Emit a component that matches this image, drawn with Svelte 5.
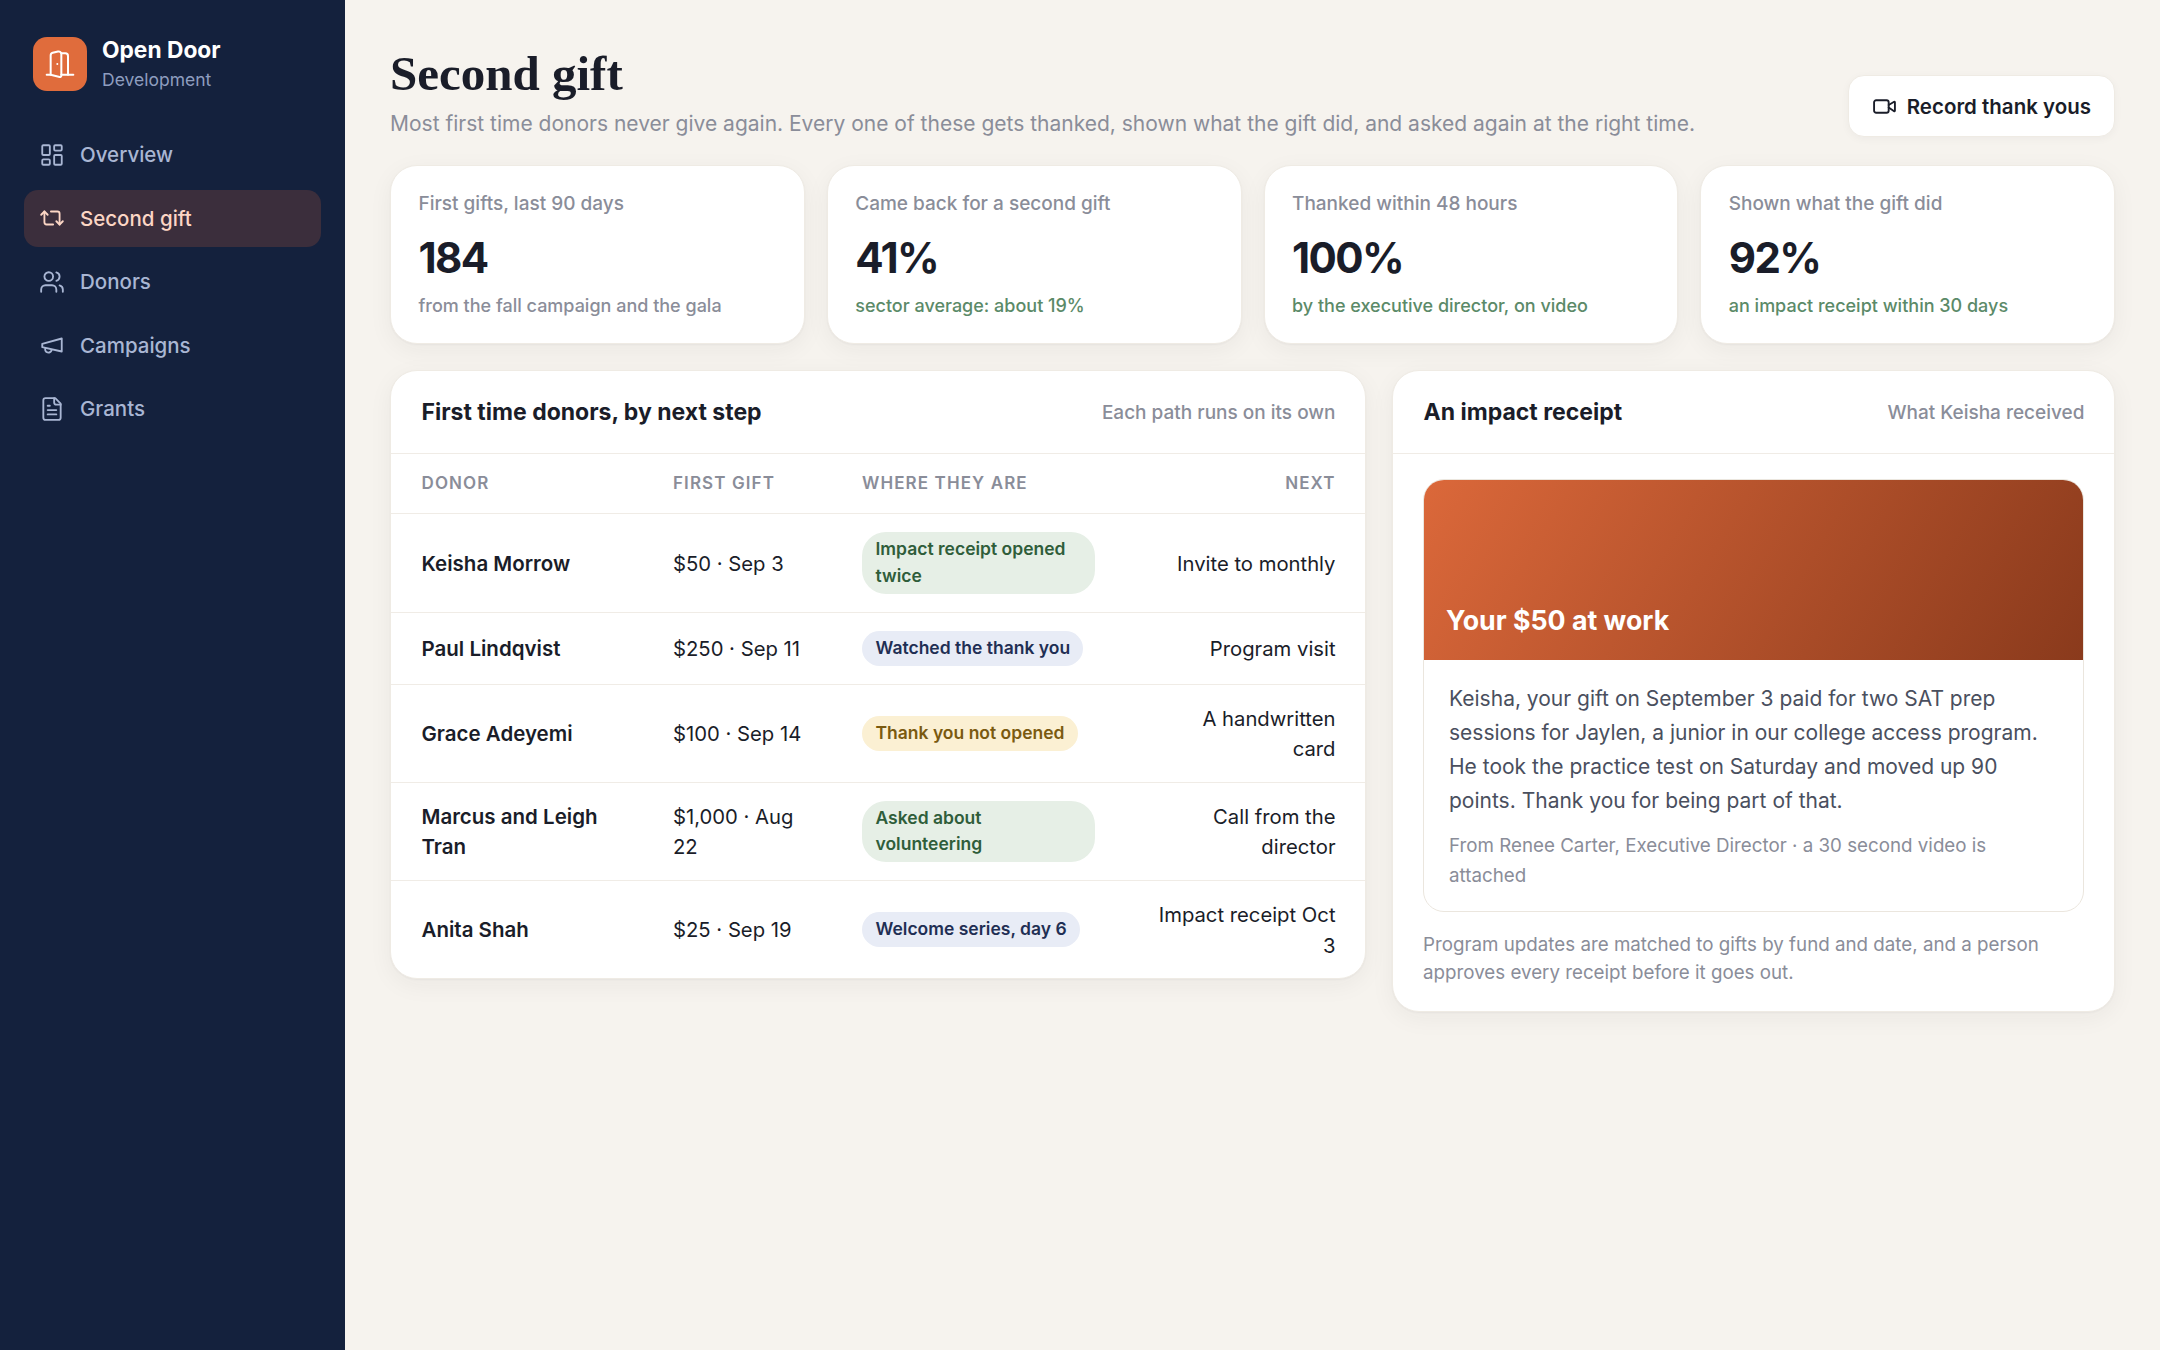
<script lang="ts">
  const nav = [
    { label: 'Overview', icon: 'grid' },
    { label: 'Second gift', icon: 'repeat', active: true },
    { label: 'Donors', icon: 'users' },
    { label: 'Campaigns', icon: 'megaphone' },
    { label: 'Grants', icon: 'file' }
  ];

  const stats = [
    { label: 'First gifts, last 90 days', value: '184', note: 'from the fall campaign and the gala', good: false },
    { label: 'Came back for a second gift', value: '41%', note: 'sector average: about 19%', good: true },
    { label: 'Thanked within 48 hours', value: '100%', note: 'by the executive director, on video', good: true },
    { label: 'Shown what the gift did', value: '92%', note: 'an impact receipt within 30 days', good: true }
  ];

  const donors = [
    { name: 'Keisha Morrow', gift: '$50 · Sep 3', status: 'Impact receipt opened twice', tone: 'green', next: 'Invite to monthly' },
    { name: 'Paul Lindqvist', gift: '$250 · Sep 11', status: 'Watched the thank you', tone: 'blue', next: 'Program visit' },
    { name: 'Grace Adeyemi', gift: '$100 · Sep 14', status: 'Thank you not opened', tone: 'amber', next: 'A handwritten card' },
    { name: 'Marcus and Leigh Tran', gift: '$1,000 · Aug 22', status: 'Asked about volunteering', tone: 'green', next: 'Call from the director' },
    { name: 'Anita Shah', gift: '$25 · Sep 19', status: 'Welcome series, day 6', tone: 'blue', next: 'Impact receipt Oct 3' }
  ];
</script>

<div class="shell">
  <aside class="sidebar">
    <div class="brand">
      <div class="logo">
        <svg viewBox="0 0 24 24" width="32" height="32" fill="none" stroke="currentColor" stroke-width="1.5" stroke-linecap="round" stroke-linejoin="round">
          <path d="M13 4h3a2 2 0 0 1 2 2v14" />
          <path d="M2 20h3" />
          <path d="M13 20h9" />
          <path d="M10 12v.01" />
          <path d="M13 4.562v16.157a1 1 0 0 1-1.242.97L5 20V5.562a2 2 0 0 1 1.515-1.94l4-1A2 2 0 0 1 13 4.561Z" />
        </svg>
      </div>
      <div>
        <div class="brand-name">Open Door</div>
        <div class="brand-sub">Development</div>
      </div>
    </div>

    <nav class="nav">
      {#each nav as item}
        <div class="nav-item" class:active={item.active}>
          <svg viewBox="0 0 24 24" width="26" height="26" fill="none" stroke="currentColor" stroke-width="1.7" stroke-linecap="round" stroke-linejoin="round">
            {#if item.icon === 'grid'}
              <rect width="7" height="9" x="3" y="3" rx="1" />
              <rect width="7" height="5" x="14" y="3" rx="1" />
              <rect width="7" height="9" x="14" y="12" rx="1" />
              <rect width="7" height="5" x="3" y="16" rx="1" />
            {:else if item.icon === 'repeat'}
              <path d="m2 9 3-3 3 3" />
              <path d="M13 18H7a2 2 0 0 1-2-2V6" />
              <path d="m22 15-3 3-3-3" />
              <path d="M11 6h6a2 2 0 0 1 2 2v10" />
            {:else if item.icon === 'users'}
              <path d="M16 21v-2a4 4 0 0 0-4-4H6a4 4 0 0 0-4 4v2" />
              <circle cx="9" cy="7" r="4" />
              <path d="M22 21v-2a4 4 0 0 0-3-3.87" />
              <path d="M16 3.13a4 4 0 0 1 0 7.75" />
            {:else if item.icon === 'megaphone'}
              <path d="m3 11 18-5v12L3 14v-3z" />
              <path d="M11.6 16.8a3 3 0 1 1-5.8-1.6" />
            {:else}
              <path d="M15 2H6a2 2 0 0 0-2 2v16a2 2 0 0 0 2 2h12a2 2 0 0 0 2-2V7Z" />
              <path d="M14 2v4a2 2 0 0 0 2 2h4" />
              <path d="M10 9H8" />
              <path d="M16 13H8" />
              <path d="M16 17H8" />
            {/if}
          </svg>
          <span>{item.label}</span>
        </div>
      {/each}
    </nav>
  </aside>

  <main class="main">
    <header class="page-head">
      <div>
        <h1>Second gift</h1>
        <p class="lede">Most first time donors never give again. Every one of these gets thanked, shown what the gift did, and asked again at the right time.</p>
      </div>
      <button class="record">
        <svg viewBox="0 0 24 24" width="25" height="25" fill="none" stroke="currentColor" stroke-width="1.8" stroke-linecap="round" stroke-linejoin="round">
          <path d="m16 13 5.223 3.482a.5.5 0 0 0 .777-.416V7.87a.5.5 0 0 0-.752-.432L16 10.5" />
          <rect x="2" y="6" width="14" height="12" rx="2" />
        </svg>
        Record thank yous
      </button>
    </header>

    <section class="stats">
      {#each stats as stat}
        <div class="stat">
          <div class="stat-label">{stat.label}</div>
          <div class="stat-value">{stat.value}</div>
          <div class="stat-note" class:good={stat.good}>{stat.note}</div>
        </div>
      {/each}
    </section>

    <section class="columns">
      <div class="card">
        <div class="card-head">
          <h2>First time donors, by next step</h2>
          <span>Each path runs on its own</span>
        </div>
        <table>
          <colgroup>
            <col class="col-donor" />
            <col class="col-gift" />
            <col class="col-status" />
            <col />
          </colgroup>
          <thead>
            <tr>
              <th>Donor</th>
              <th>First gift</th>
              <th>Where they are</th>
              <th class="right">Next</th>
            </tr>
          </thead>
          <tbody>
            {#each donors as donor}
              <tr>
                <td class="name">{donor.name}</td>
                <td>{donor.gift}</td>
                <td><span class="pill {donor.tone}">{donor.status}</span></td>
                <td class="right">{donor.next}</td>
              </tr>
            {/each}
          </tbody>
        </table>
      </div>

      <div class="card receipt-card">
        <div class="card-head">
          <h2>An impact receipt</h2>
          <span>What Keisha received</span>
        </div>
        <div class="receipt-body">
          <div class="receipt">
            <div class="hero">Your $50 at work</div>
            <div class="receipt-text">
              <p class="message">Keisha, your gift on September 3 paid for two SAT prep sessions for Jaylen, a junior in our college access program. He took the practice test on Saturday and moved up 90 points. Thank you for being part of that.</p>
              <p class="from">From Renee Carter, Executive Director · a 30 second video is attached</p>
            </div>
          </div>
          <p class="footnote">Program updates are matched to gifts by fund and date, and a person approves every receipt before it goes out.</p>
        </div>
      </div>
    </section>
  </main>
</div>

<style>
  :global(body) {
    margin: 0;
    background: #f6f3ee;
    font-family: Inter, 'Noto Sans', sans-serif;
    color: #1a1d29;
  }

  .shell {
    display: grid;
    grid-template-columns: 345px 1fr;
    min-height: 1350px;
  }

  .sidebar {
    background: #14213d;
    padding: 36px 24px;
    box-sizing: border-box;
  }

  .brand {
    display: flex;
    align-items: center;
    gap: 15px;
    padding: 0 9px;
    margin-bottom: 35px;
  }

  .logo {
    width: 54px;
    height: 54px;
    border-radius: 14px;
    background: #e06c3c;
    color: #fff;
    display: flex;
    align-items: center;
    justify-content: center;
  }

  .brand-name {
    font-size: 22.75px;
    font-weight: 700;
    line-height: 27px;
    color: #fff;
  }

  .brand-sub {
    font-size: 17.5px;
    line-height: 23px;
    margin-top: 5px;
    color: #8e9dbf;
  }

  .nav {
    display: flex;
    flex-direction: column;
    gap: 6.6px;
  }

  .nav-item {
    height: 57px;
    display: flex;
    align-items: center;
    gap: 15px;
    padding: 0 15px;
    border-radius: 14px;
    font-size: 20.5px;
    font-weight: 500;
    color: #a9b6d3;
  }

  .nav-item.active {
    background: #3b2e3c;
    color: #fcd6c5;
  }

  .main {
    padding: 39px 45px 40px;
    min-width: 0;
  }

  .page-head {
    display: flex;
    justify-content: space-between;
    align-items: flex-end;
    margin-bottom: 26px;
  }

  h1 {
    margin: 4px 0 0;
    font-family: 'Liberation Serif', serif;
    font-size: 49px;
    line-height: 62px;
    font-weight: 700;
  }

  .lede {
    margin: 4px 0 0;
    font-size: 21px;
    line-height: 30px;
    color: #8a8d99;
  }

  .record {
    display: flex;
    align-items: center;
    gap: 10px;
    height: 62px;
    margin-bottom: 2px;
    padding: 0 23px;
    background: #fff;
    border: 1px solid #efebe4;
    border-radius: 16px;
    font-family: inherit;
    font-size: 20.5px;
    font-weight: 600;
    color: #1a1d29;
    box-shadow: 0 2px 8px rgba(30, 30, 40, 0.04);
  }

  .stats {
    display: grid;
    grid-template-columns: repeat(4, 1fr);
    gap: 22px;
    margin-bottom: 26px;
  }

  .stat {
    height: 179px;
    box-sizing: border-box;
    padding: 24px 27.5px;
    background: #fff;
    border: 1px solid #efebe4;
    border-radius: 27px;
    box-shadow: 0 1px 2px rgba(30, 30, 40, 0.04), 0 6px 24px rgba(30, 30, 40, 0.05);
  }

  .stat-label {
    font-size: 19px;
    font-weight: 500;
    line-height: 27px;
    color: #8a8d99;
  }

  .stat-value {
    font-size: 42px;
    font-weight: 700;
    letter-spacing: -1.6px;
    line-height: 52px;
    margin-top: 15px;
    color: #1a1d29;
  }

  .stat-note {
    font-size: 18px;
    font-weight: 500;
    line-height: 27px;
    margin-top: 7.5px;
    color: #8a8d99;
  }

  .stat-note.good {
    color: #5b8a68;
  }

  .columns {
    display: grid;
    grid-template-columns: 1.35fr 1fr;
    gap: 26px;
    align-items: start;
  }

  .card {
    background: #fff;
    border: 1px solid #efebe4;
    border-radius: 27px;
    overflow: hidden;
    box-shadow: 0 1px 2px rgba(30, 30, 40, 0.04), 0 6px 24px rgba(30, 30, 40, 0.05);
  }

  .card-head {
    display: flex;
    justify-content: space-between;
    align-items: center;
    height: 83px;
    box-sizing: border-box;
    padding: 0 29.5px 0 30.5px;
    border-bottom: 1px solid #f0ece6;
  }

  h2 {
    margin: 0;
    font-size: 23px;
    font-weight: 700;
    color: #1a1d29;
  }

  .card-head span {
    font-size: 19px;
    font-weight: 500;
    color: #8a8d99;
  }

  table {
    width: 100%;
    table-layout: fixed;
    border-collapse: collapse;
    font-size: 20.25px;
    line-height: 30.5px;
  }

  .col-donor {
    width: 282px;
  }

  .col-gift {
    width: 158px;
  }

  .col-status {
    width: 295px;
  }

  th {
    height: 59px;
    padding: 0 31px 0 30.5px;
    text-align: left;
    font-size: 17px;
    font-weight: 600;
    letter-spacing: 1.1px;
    text-transform: uppercase;
    color: #8a8d99;
  }

  td {
    padding: 19px 31px 17px 30.5px;
    border-top: 1px solid #f0ece6;
  }

  td:nth-child(2),
  th:nth-child(2) {
    padding-left: 0;
    padding-right: 8px;
  }

  td:nth-child(3),
  th:nth-child(3) {
    padding-left: 31px;
    padding-right: 31px;
  }

  .right {
    text-align: right;
    padding-left: 31px;
    padding-right: 29.5px;
  }

  .name {
    font-weight: 600;
    font-size: 20.5px;
  }

  .pill {
    display: inline-block;
    padding: 4.25px 13px 4.25px 13.5px;
    border-radius: 24px;
    font-size: 17.5px;
    font-weight: 600;
    line-height: 26.5px;
    vertical-align: middle;
    position: relative;
    top: -1px;
  }

  .pill.green {
    background: #e6efe6;
    color: #2f5d3a;
  }

  .pill.blue {
    background: #e8ecf6;
    color: #1f2f54;
  }

  .pill.amber {
    background: #fbf0d3;
    color: #7a5a10;
  }

  .receipt-body {
    padding: 25px 30px 24px 30px;
  }

  .receipt {
    border: 1px solid #ebe6de;
    border-radius: 21px;
    overflow: hidden;
  }

  .hero {
    height: 180px;
    box-sizing: border-box;
    padding: 0 22px 24px;
    display: flex;
    align-items: flex-end;
    background: linear-gradient(120deg, #db683a, #8a3a1c);
    font-size: 26.75px;
    font-weight: 700;
    color: #fff;
  }

  .receipt-text {
    padding: 21.5px 25px 20px;
  }

  .message {
    margin: 0;
    font-size: 21px;
    line-height: 34px;
    color: #4a4f5e;
  }

  .from {
    margin: 13px 0 0;
    font-size: 18.75px;
    line-height: 30px;
    color: #8a8d99;
  }

  .footnote {
    margin: 19px 0 0;
    font-size: 18.75px;
    line-height: 28px;
    color: #8a8d99;
  }
</style>
